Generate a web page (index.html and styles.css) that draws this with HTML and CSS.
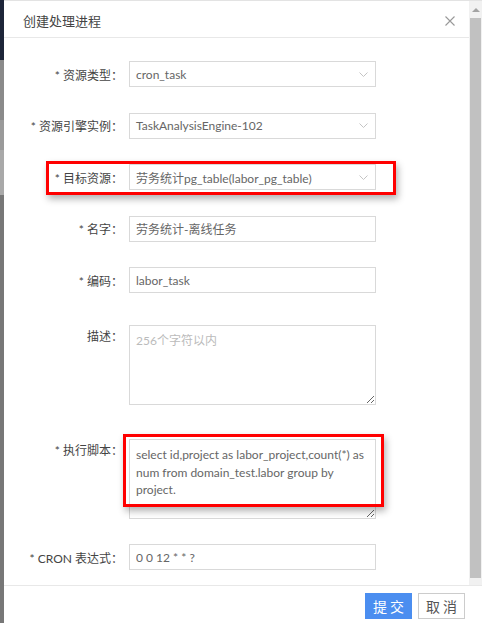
FILE: index.html
```html
<!DOCTYPE html>
<html lang="zh-CN">
<head>
    <meta charset="UTF-8">
    <meta name="viewport" content="width=device-width, initial-scale=1.0">
    <title>创建处理进程</title>
    <link rel="stylesheet" href="styles.css">
</head>
<body>
    <div class="backdrop-strip"></div>

    <div class="modal">
        <div class="modal-scroll">
            <div class="modal-content">
                <header class="modal-header">
                    <h3>创建处理进程</h3>
                    <button class="close-btn" aria-label="关闭">
                        <svg width="10" height="10" viewBox="0 0 10 10">
                            <path d="M0.5 0.5 L9.5 9.5 M9.5 0.5 L0.5 9.5" stroke="#999" stroke-width="1.1" fill="none"/>
                        </svg>
                    </button>
                </header>

                <form class="modal-body">
                    <div class="form-row">
                        <label>* 资源类型：</label>
                        <div class="select-box">
                            <span>cron_task</span>
                            <svg class="arrow" width="9" height="5" viewBox="0 0 9 5"><path d="M0.5 0.5 L4.5 4.5 L8.5 0.5" stroke="#c4c4c4" fill="none"/></svg>
                        </div>
                    </div>
                    <div class="form-row">
                        <label>* 资源引擎实例：</label>
                        <div class="select-box">
                            <span>TaskAnalysisEngine-102</span>
                            <svg class="arrow" width="9" height="5" viewBox="0 0 9 5"><path d="M0.5 0.5 L4.5 4.5 L8.5 0.5" stroke="#c4c4c4" fill="none"/></svg>
                        </div>
                    </div>
                    <div class="form-row">
                        <label>* 目标资源：</label>
                        <div class="select-box">
                            <span>劳务统计pg_table(labor_pg_table)</span>
                            <svg class="arrow" width="9" height="5" viewBox="0 0 9 5"><path d="M0.5 0.5 L4.5 4.5 L8.5 0.5" stroke="#c4c4c4" fill="none"/></svg>
                        </div>
                    </div>
                    <div class="form-row">
                        <label>* 名字：</label>
                        <input type="text" value="劳务统计-离线任务">
                    </div>
                    <div class="form-row">
                        <label>* 编码：</label>
                        <input type="text" value="labor_task">
                    </div>
                    <div class="form-row area-row">
                        <label>描述：</label>
                        <textarea placeholder="256个字符以内"></textarea>
                    </div>
                    <div class="form-row area-row script-row">
                        <label>* 执行脚本：</label>
                        <textarea wrap="off">select id,project as labor_project,count(*) as
num from domain_test.labor group by
project.</textarea>
                    </div>
                    <div class="form-row cron-row">
                        <label>* CRON 表达式：</label>
                        <input type="text" value="0 0 12 * * ?">
                    </div>

                    <div class="mark mark-target"></div>
                    <div class="mark mark-script"></div>
                </form>
            </div>

            <div class="scrollbar">
                <div class="scroll-up"></div>
                <div class="scroll-thumb"></div>
            </div>
        </div>

        <footer class="modal-footer">
            <button type="button" class="btn btn-primary">提交</button>
            <button type="button" class="btn btn-default">取消</button>
        </footer>
    </div>
</body>
</html>
```

FILE: styles.css
```css
* {
    margin: 0;
    padding: 0;
    box-sizing: border-box;
    font-family: Lato, 'Noto Sans CJK SC', sans-serif;
}

body {
    display: flex;
    height: 623px;
    overflow: hidden;
    background: #777;
}

.backdrop-strip {
    width: 4px;
    background: linear-gradient(to bottom,
        #1d2539 0, #1d2539 60px,
        #8a8a8a 60px, #8a8a8a 120px,
        #9a9a9a 120px, #9a9a9a 150px,
        #a9a9a9 150px, #a9a9a9 195px,
        #777 195px);
}

.modal {
    flex: 1;
    display: flex;
    flex-direction: column;
    background: #fff;
}

.modal-scroll {
    display: flex;
    height: 586px;
    border-top: 1px solid #e3e3e3;
    border-bottom: 1px solid #e8e8e8;
}

.modal-content {
    flex: 1;
}

.modal-header {
    height: 37px;
    display: flex;
    align-items: center;
    justify-content: space-between;
    padding: 3px 14px 0 19px;
    border-bottom: 1px solid #e8e8e8;
}

.modal-header h3 {
    font-size: 13px;
    font-weight: normal;
    color: #444;
}

.close-btn {
    border: none;
    background: none;
    width: 10px;
    height: 10px;
    display: flex;
}

.modal-body {
    position: relative;
    padding-top: 23px;
}

.form-row {
    display: flex;
    align-items: center;
    margin-bottom: 25.5px;
}

.form-row label {
    width: 125px;
    padding-right: 6px;
    text-align: right;
    font-size: 12px;
    color: #444;
    white-space: nowrap;
}

.select-box,
.form-row input,
.form-row textarea {
    width: 247px;
    height: 26px;
    border: 1px solid #d9d9d9;
    background: #fff;
    font-size: 12px;
    color: #666;
    padding: 0 6px;
}

.select-box {
    display: flex;
    align-items: center;
    justify-content: space-between;
    padding-right: 7px;
}

.form-row input {
    outline: none;
}

.area-row {
    align-items: flex-start;
    margin-top: 32px;
    margin-bottom: 34px;
}

.area-row label {
    padding-top: 2px;
}

.form-row textarea {
    height: 80px;
    padding: 6px 3px 5px 6px;
    line-height: 17.5px;
    resize: vertical;
    outline: none;
    overflow: hidden;
}

.form-row textarea::placeholder {
    color: #bbb;
}

.script-row {
    margin-top: 0;
    margin-bottom: 25px;
}

.mark {
    position: absolute;
    border: 3px solid #f00;
    box-shadow: 2px 4px 7px rgba(0, 0, 0, 0.3);
}

.mark-target {
    left: 42px;
    top: 123px;
    width: 350px;
    height: 34px;
}

.mark-script {
    left: 119px;
    top: 396px;
    width: 261px;
    height: 73px;
}

.scrollbar {
    width: 13px;
    background: #f1f1f1;
    display: flex;
    flex-direction: column;
    align-items: center;
    padding-top: 7px;
}

.scroll-up {
    width: 0;
    height: 0;
    border-left: 4px solid transparent;
    border-right: 4px solid transparent;
    border-bottom: 4px solid #a3a3a3;
    margin-bottom: 6px;
}

.scroll-thumb {
    width: 11px;
    height: 560px;
    background: #c1c1c1;
}

.modal-footer {
    flex: 1;
    display: flex;
    justify-content: flex-end;
    align-items: flex-start;
    gap: 6px;
    padding: 7px 17px 0 0;
}

.btn {
    width: 47px;
    height: 26px;
    font-size: 14px;
    letter-spacing: 3px;
    text-indent: 3px;
    font-family: 'Noto Sans CJK SC', sans-serif;
    cursor: pointer;
}

.btn-primary {
    background: #4b8ef0;
    color: #fff;
    border: 1px solid #4b8ef0;
}

.btn-default {
    background: #fff;
    color: #555;
    border: 1px solid #ccc;
}
```
